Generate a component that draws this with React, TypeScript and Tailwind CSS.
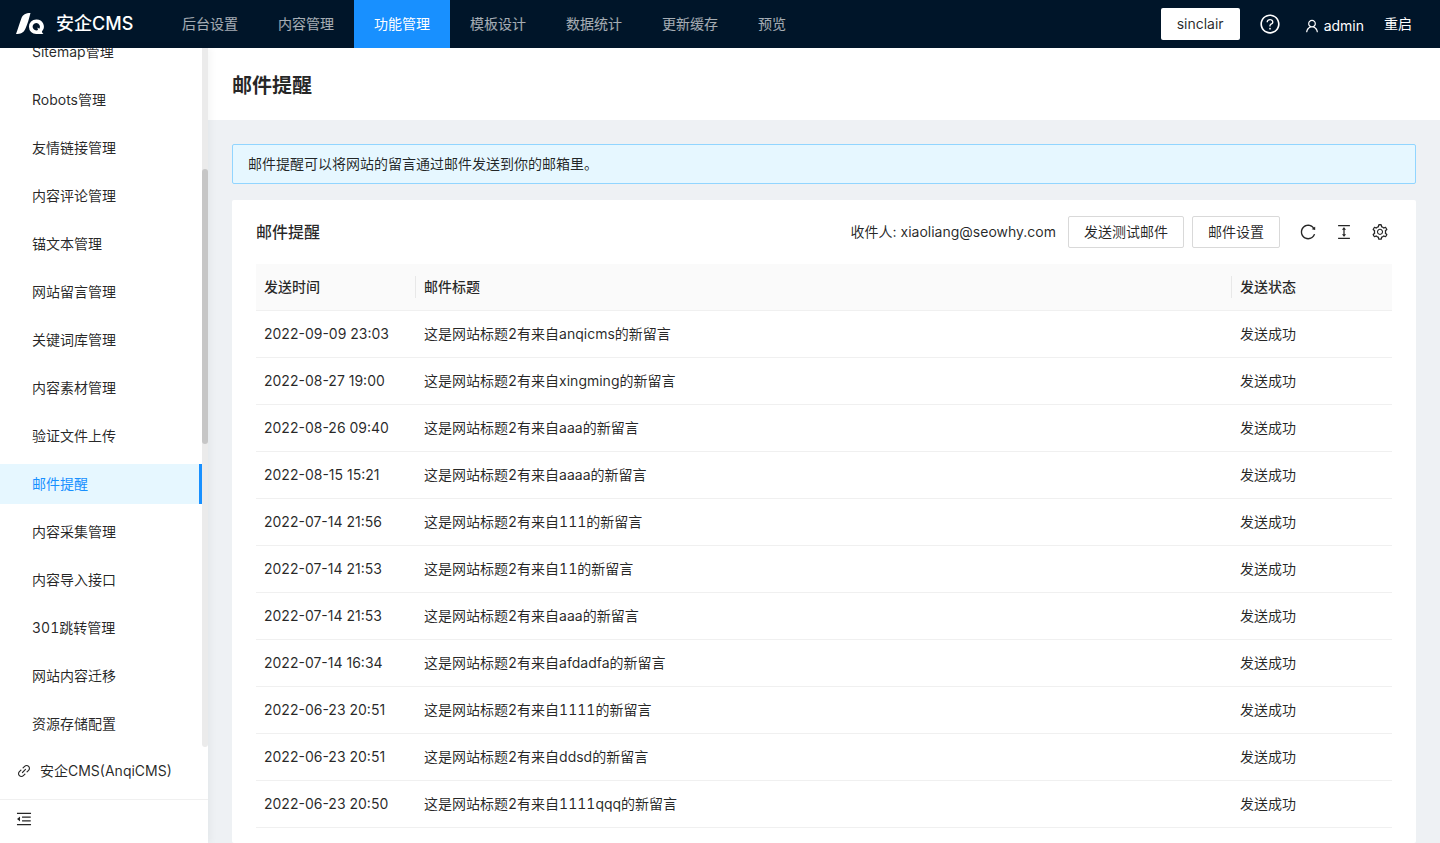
import React from "react";
import {
  AiOutlineColumnHeight,
  AiOutlineLink,
  AiOutlineMenuFold,
  AiOutlineQuestionCircle,
  AiOutlineReload,
  AiOutlineSetting,
  AiOutlineUser,
} from "react-icons/ai";

const navItems = ["后台设置", "内容管理", "功能管理", "模板设计", "数据统计", "更新缓存", "预览"];

const menuItems = [
  "Sitemap管理",
  "Robots管理",
  "友情链接管理",
  "内容评论管理",
  "锚文本管理",
  "网站留言管理",
  "关键词库管理",
  "内容素材管理",
  "验证文件上传",
  "邮件提醒",
  "内容采集管理",
  "内容导入接口",
  "301跳转管理",
  "网站内容迁移",
  "资源存储配置",
];

const mails = [
  { time: "2022-09-09 23:03", from: "anqicms" },
  { time: "2022-08-27 19:00", from: "xingming" },
  { time: "2022-08-26 09:40", from: "aaa" },
  { time: "2022-08-15 15:21", from: "aaaa" },
  { time: "2022-07-14 21:56", from: "111" },
  { time: "2022-07-14 21:53", from: "11" },
  { time: "2022-07-14 21:53", from: "aaa" },
  { time: "2022-07-14 16:34", from: "afdadfa" },
  { time: "2022-06-23 20:51", from: "1111" },
  { time: "2022-06-23 20:51", from: "ddsd" },
  { time: "2022-06-23 20:50", from: "1111qqq" },
];

const Logo: React.FC = () => (
  <svg viewBox="0 0 28 22" className="h-[22px] w-7" fill="currentColor" aria-hidden="true">
    <path d="M0 21C2 16 3.500 10 5.500 5C7 1.500 9.500 0 14.500 0C13 6 11.500 11 9.300 16C7.500 20 4.500 21 0 21Z" />
    <path
      fillRule="evenodd"
      d="M20.200 6.500A7.200 7.200 0 1 0 20.200 21H27.500C26.700 20.600 26.200 20 25.900 18.600A7.200 7.200 0 0 0 20.200 6.500ZM20.200 10A3.700 3.700 0 0 1 23.300 15.700L21.400 14.500L22 17A3.700 3.700 0 1 1 20.200 10Z"
    />
  </svg>
);

const Header: React.FC = () => (
  <header className="flex h-12 shrink-0 items-center bg-[#001529] pl-4 pr-7 text-white">
    <a href="#" className="flex w-[146px] items-center gap-3">
      <Logo />
      <span className="text-lg font-medium">安企CMS</span>
    </a>
    <nav className="flex flex-1">
      {navItems.map((item) => (
        <a
          key={item}
          href="#"
          className={
            item === "功能管理"
              ? "bg-[#1890ff] px-5 leading-[48px] text-white"
              : "px-5 leading-[48px] text-white/65"
          }
        >
          {item}
        </a>
      ))}
    </nav>
    <div className="flex items-center gap-5">
      <button className="h-8 rounded-xs bg-white px-4 text-black/85">sinclair</button>
      <button aria-label="帮助" className="flex w-5 justify-center">
        <AiOutlineQuestionCircle size={22} className="shrink-0" />
      </button>
      <button className="ml-1 flex items-center gap-1 pt-1">
        <AiOutlineUser size={16} />
        admin
      </button>
      <button>重启</button>
    </div>
  </header>
);

const Sidebar: React.FC = () => (
  <aside className="z-10 flex w-52 shrink-0 flex-col bg-white shadow-[2px_0_8px_0_rgba(29,35,41,0.05)]">
    <div className="flex min-h-0 flex-1">
      <div className="flex-1 overflow-hidden">
        <ul className="-mt-4 flex flex-col gap-2 tabular-nums">
          {menuItems.map((item) => (
            <li key={item}>
              <a
                href="#"
                className={
                  item === "邮件提醒"
                    ? "block border-r-3 border-[#1890ff] bg-[#e6f7ff] pl-8 leading-10 text-[#1890ff]"
                    : "block pl-8 leading-10"
                }
              >
                {item}
              </a>
            </li>
          ))}
        </ul>
      </div>
      <div className="w-1.5 rounded-b-[3px] bg-[#ebebeb] pt-[121px]">
        <div className="h-[275px] rounded-[3px] bg-[#c6c6c6]" />
      </div>
    </div>
    <a href="#" className="mt-1 mb-2 flex h-10 items-center gap-2 px-4">
      <AiOutlineLink size={16} />
      安企CMS(AnqiCMS)
    </a>
    <div className="flex h-11 items-center border-t border-[#f0f0f0] px-[15px] pb-1.5">
      <button aria-label="收起菜单">
        <AiOutlineMenuFold size={18} />
      </button>
    </div>
  </aside>
);

const MailTable: React.FC = () => (
  <table className="w-full table-fixed border-separate border-spacing-0 text-left leading-[22px]">
    <thead className="bg-[#fafafa]">
      <tr>
        <th className="w-40 border-b border-[#f0f0f0] py-3 pl-2 font-medium">发送时间</th>
        <th className="border-b border-[#f0f0f0] py-3 font-medium">
          <div className="-ml-px border-l border-[#e8e8e8] pl-2">邮件标题</div>
        </th>
        <th className="w-40 border-b border-[#f0f0f0] py-3 font-medium">
          <div className="-ml-px border-l border-[#e8e8e8] pl-2">发送状态</div>
        </th>
      </tr>
    </thead>
    <tbody>
      {mails.map((mail, index) => (
        <tr key={index}>
          <td className="border-b border-[#f0f0f0] px-2 py-3">{mail.time}</td>
          <td className="border-b border-[#f0f0f0] px-2 py-3 tabular-nums">
            这是网站标题2有来自{mail.from}的新留言
          </td>
          <td className="border-b border-[#f0f0f0] px-2 py-3">发送成功</td>
        </tr>
      ))}
    </tbody>
  </table>
);

const App: React.FC = () => {
  return (
    <div className="flex h-screen flex-col overflow-hidden bg-[#eef1f4] font-['Inter','Noto_Sans_CJK_SC',sans-serif] text-sm text-black/85">
      <Header />
      <div className="flex min-h-0 flex-1">
        <Sidebar />
        <main className="flex min-w-0 flex-1 flex-col overflow-hidden">
          <div className="bg-white px-6 pt-5.5 pb-4.5">
            <h1 className="text-xl leading-8 font-semibold">邮件提醒</h1>
          </div>
          <div className="flex flex-1 flex-col gap-4 px-6 pt-6">
            <div className="rounded-xs border border-[#91d5ff] bg-[#e6f7ff] px-[15px] py-2 leading-[22px]">
              邮件提醒可以将网站的留言通过邮件发送到你的邮箱里。
            </div>
            <section className="flex-1 rounded-xs bg-white px-6">
              <div className="flex items-center py-4">
                <h2 className="flex-1 text-base font-medium">邮件提醒</h2>
                <span className="mr-3">收件人: xiaoliang@seowhy.com</span>
                <button className="mr-2 h-8 rounded-xs border border-[#d9d9d9] px-[15px]">发送测试邮件</button>
                <button className="h-8 rounded-xs border border-[#d9d9d9] px-[15px]">邮件设置</button>
                <div className="ml-5 flex gap-5 pr-1">
                  <button aria-label="刷新" className="flex w-4 justify-center">
                    <AiOutlineReload size={18} className="shrink-0" />
                  </button>
                  <button aria-label="密度" className="flex w-4 justify-center">
                    <AiOutlineColumnHeight size={18} className="shrink-0" />
                  </button>
                  <button aria-label="列设置" className="flex w-4 justify-center">
                    <AiOutlineSetting size={18} className="shrink-0" />
                  </button>
                </div>
              </div>
              <MailTable />
            </section>
          </div>
        </main>
      </div>
    </div>
  );
};

export default App;
